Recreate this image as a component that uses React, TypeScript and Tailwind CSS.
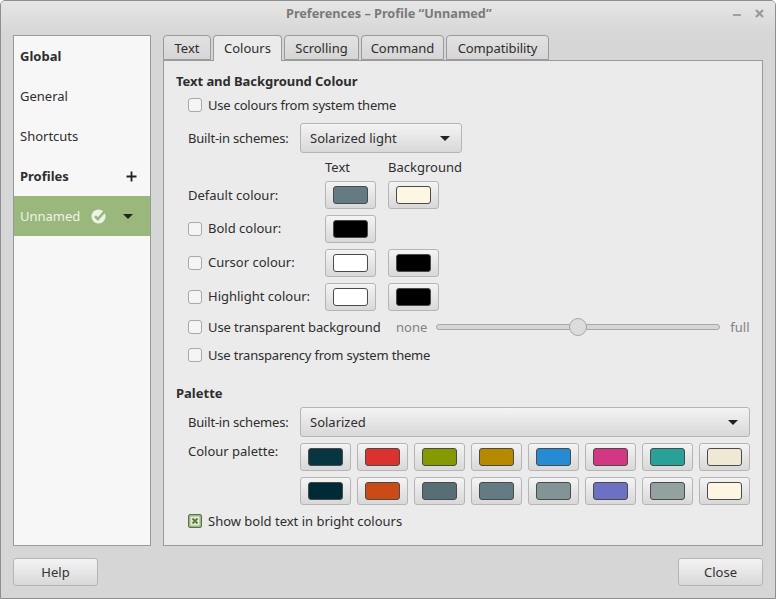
const font = { fontFamily: '"Noto Sans", sans-serif' };

const tabs = [
  { label: "Text", width: "w-[48px]" },
  { label: "Colours", width: "w-[69px]" },
  { label: "Scrolling", width: "w-[75px]" },
  { label: "Command", width: "w-[83px]" },
  { label: "Compatibility", width: "w-[103px] tracking-[-0.1px]" },
];
const paletteTop = ["#073642", "#dc322f", "#859900", "#b58900", "#268bd2", "#d33682", "#2aa198", "#eee8d5"];
const paletteBottom = ["#002b36", "#cb4b16", "#586e75", "#657b83", "#839496", "#6c71c4", "#93a1a1", "#fdf6e3"];

function Caret() {
  return <span className="h-0 w-0 border-x-[5px] border-t-[5px] border-x-transparent border-t-[#222]" />;
}

function Checkbox({ checked = false }: { checked?: boolean }) {
  if (checked) {
    return (
      <span className="flex h-[14px] w-[14px] shrink-0 items-center justify-center rounded-[2px] border border-[#5f7050] bg-[#9ab87c]">
        <svg width="10" height="10" viewBox="0 0 10 10">
          <rect x="0.5" y="0.5" width="9" height="9" fill="#e4ecd9" />
          <path d="M2.5 2.5l5 5M7.5 2.5l-5 5" stroke="#5d7a44" strokeWidth="2" />
        </svg>
      </span>
    );
  }
  return <span className="h-[14px] w-[14px] shrink-0 rounded-[3px] border border-[#a8a8a8] bg-[#f5f5f5]" />;
}

function ColourButton({ colour }: { colour: string }) {
  return (
    <button className="flex h-[28px] w-[51px] shrink-0 items-center justify-center rounded-[3px] border border-[#b5b5b5] bg-gradient-to-b from-[#f4f4f4] to-[#d8d8d8]">
      <span className="h-[18px] w-[35px] rounded-[3px] border border-[#4a4a4a]" style={{ backgroundColor: colour }} />
    </button>
  );
}

function Combo({ label, className }: { label: string; className: string }) {
  return (
    <div className={`flex h-[30px] items-center justify-between rounded-[3px] border border-[#b5b5b5] bg-gradient-to-b from-[#f4f4f4] to-[#d8d8d8] pl-[9px] pr-[11px] ${className}`}>
      <span>{label}</span>
      <Caret />
    </div>
  );
}

function ColourRow({ label, colours, check = true }: { label: string; colours: string[]; check?: boolean }) {
  return (
    <div className="flex h-[28px] items-center">
      <div className="flex w-[137px] items-center gap-[6px]">
        {check && <Checkbox />}
        <span className={check ? "pb-[2px]" : ""}>{label}</span>
      </div>
      <div className="flex gap-[12px]">
        {colours.map((c, i) => (
          <ColourButton key={i} colour={c} />
        ))}
      </div>
    </div>
  );
}

function SideItem({ label, bold }: { label: string; bold?: boolean }) {
  return <div className={`flex h-[40px] items-center px-[6px] ${bold ? "font-bold" : ""}`}>{label}</div>;
}

function BottomButton({ label }: { label: string }) {
  return (
    <button className="h-[28px] w-[85px] rounded-[3px] border border-[#b5b5b5] bg-gradient-to-b from-[#f4f4f4] to-[#d8d8d8] text-[#333]">
      {label}
    </button>
  );
}

export default function App() {
  return (
    <div style={font} className="flex h-[599px] w-[776px] flex-col overflow-hidden rounded-t-[5px] border border-[#8f8f8f] bg-[#d6d6d6] text-[13px] leading-none text-[#2e2e2e]">
      {/* title bar */}
      <div className="flex h-[34px] shrink-0 items-start justify-between bg-gradient-to-b from-[#e6e6e6] to-[#d6d6d6] pl-[285px] pr-[11px] pt-[6px]">
        <span className="text-[12.7px] font-bold text-[#7a7a7a]">Preferences – Profile “Unnamed”</span>
        <div className="flex items-center gap-[14px] pt-[2px]">
          <span className="mt-[3px] h-[2px] w-[8px] bg-[#a0a0a0]" />
          <svg width="9" height="9" viewBox="0 0 9 9">
            <path d="M1 1l7 7M8 1l-7 7" stroke="#9a9a9a" strokeWidth="2.2" />
          </svg>
        </div>
      </div>

      <div className="flex flex-1 gap-[12px] px-[12px]">
        {/* sidebar */}
        <div className="h-[511px] w-[138px] shrink-0 border border-[#9a9a9a] bg-[#f7f7f7]">
          <SideItem label="Global" bold />
          <SideItem label="General" />
          <SideItem label="Shortcuts" />
          <div className="flex h-[40px] items-center justify-between pl-[6px] pr-[13px] font-bold">
            <span>Profiles</span>
            <svg width="11" height="11" viewBox="0 0 11 11">
              <path d="M5.5 0.5v10M0.5 5.5h10" stroke="#222" strokeWidth="1.8" />
            </svg>
          </div>
          <div className="flex h-[40px] items-center bg-[#9ab87c] pl-[6px] text-[#eef3e8]">
            <span className="w-[71px]">Unnamed</span>
            <svg width="15" height="15" viewBox="0 0 15 15">
              <circle cx="7.5" cy="7.5" r="7" fill="#eef3e8" />
              <path d="M4 7.2l2.8 3 6.7-7.5" fill="none" stroke="#9ab87c" strokeWidth="2.5" />
            </svg>
            <span className="ml-[17px] flex">
              <Caret />
            </span>
          </div>
        </div>

        {/* notebook */}
        <div className="flex w-[600px] flex-col">
          <div className="flex h-[25px] gap-[2px]">
            {tabs.map((t) => (
              <div
                key={t.label}
                className={
                  t.label === "Colours"
                    ? `relative z-10 flex h-[26px] items-start justify-center rounded-t-[4px] border border-b-0 border-[#9a9a9a] bg-[#ebebeb] pt-[6px] ${t.width}`
                    : `flex h-[25px] items-start justify-center rounded-t-[4px] border border-[#9a9a9a] bg-gradient-to-b from-[#e2e2e2] to-[#d6d6d6] pt-[6px] ${t.width}`
                }
              >
                {t.label}
              </div>
            ))}
          </div>
          <div className="h-[486px] border border-[#9a9a9a] bg-[#ebebeb] pl-[12px] pr-[12px]">
            <div className="mt-[10px] flex h-[20px] items-center pt-[1px] font-bold tracking-[-0.05px]">Text and Background Colour</div>
            <div className="ml-[12px] mt-[4px] flex h-[20px] items-center gap-[6px]">
              <Checkbox />
              <span className="tracking-[-0.2px]">Use colours from system theme</span>
            </div>
            <div className="ml-[12px] mt-[8px] flex items-center">
              <span className="w-[112px] tracking-[-0.2px]">Built-in schemes:</span>
              <Combo label="Solarized light" className="w-[162px]" />
            </div>
            <div className="ml-[12px] mt-[6px] flex h-[16px] items-center">
              <span className="ml-[137px] w-[63px]">Text</span>
              <span>Background</span>
            </div>
            <div className="ml-[12px] mt-[6px] flex flex-col gap-[6px]">
              <ColourRow label="Default colour:" colours={["#657b83", "#fdf6e3"]} check={false} />
              <ColourRow label="Bold colour:" colours={["#000000"]} />
              <ColourRow label="Cursor colour:" colours={["#ffffff", "#000000"]} />
              <ColourRow label="Highlight colour:" colours={["#ffffff", "#000000"]} />
            </div>
            <div className="ml-[12px] mt-[6px] flex h-[20px] items-center">
              <Checkbox />
              <span className="ml-[6px] w-[188px] tracking-[-0.1px]">Use transparent background</span>
              <span className="text-[#828282]">none</span>
              <div className="ml-[9px] flex h-[18px] w-[284px] items-center">
                <div className="h-[6px] w-[134px] rounded-l-full border border-[#a8a8a8] bg-[#d6d6d6]" />
                <div className="-mx-px h-[18px] w-[18px] shrink-0 rounded-full border border-[#a8a8a8] bg-[#dcdcdc]" />
                <div className="h-[6px] flex-1 rounded-r-full border border-[#a8a8a8] bg-[#d6d6d6]" />
              </div>
              <span className="ml-[10px] text-[#828282]">full</span>
            </div>
            <div className="ml-[12px] mt-[8px] flex h-[20px] items-center gap-[6px]">
              <Checkbox />
              <span className="tracking-[-0.2px]">Use transparency from system theme</span>
            </div>
            <div className="mt-[18px] flex h-[20px] items-center font-bold">Palette</div>
            <div className="ml-[12px] mt-[4px] flex items-center">
              <span className="w-[112px] tracking-[-0.2px]">Built-in schemes:</span>
              <Combo label="Solarized" className="flex-1" />
            </div>
            <div className="ml-[12px] mt-[6px] flex">
              <span className="w-[112px] pt-[2px]">Colour palette:</span>
              <div className="flex flex-col gap-[6px]">
                <div className="flex gap-[6px]">
                  {paletteTop.map((c) => (
                    <ColourButton key={c} colour={c} />
                  ))}
                </div>
                <div className="flex gap-[6px]">
                  {paletteBottom.map((c) => (
                    <ColourButton key={c} colour={c} />
                  ))}
                </div>
              </div>
            </div>
            <div className="ml-[12px] mt-[6px] flex h-[20px] items-center gap-[6px]">
              <Checkbox checked />
              <span>Show bold text in bright colours</span>
            </div>
          </div>
        </div>
      </div>

      {/* actions */}
      <div className="flex h-[40px] shrink-0 items-start justify-between px-[12px]">
        <BottomButton label="Help" />
        <BottomButton label="Close" />
      </div>
    </div>
  );
}
